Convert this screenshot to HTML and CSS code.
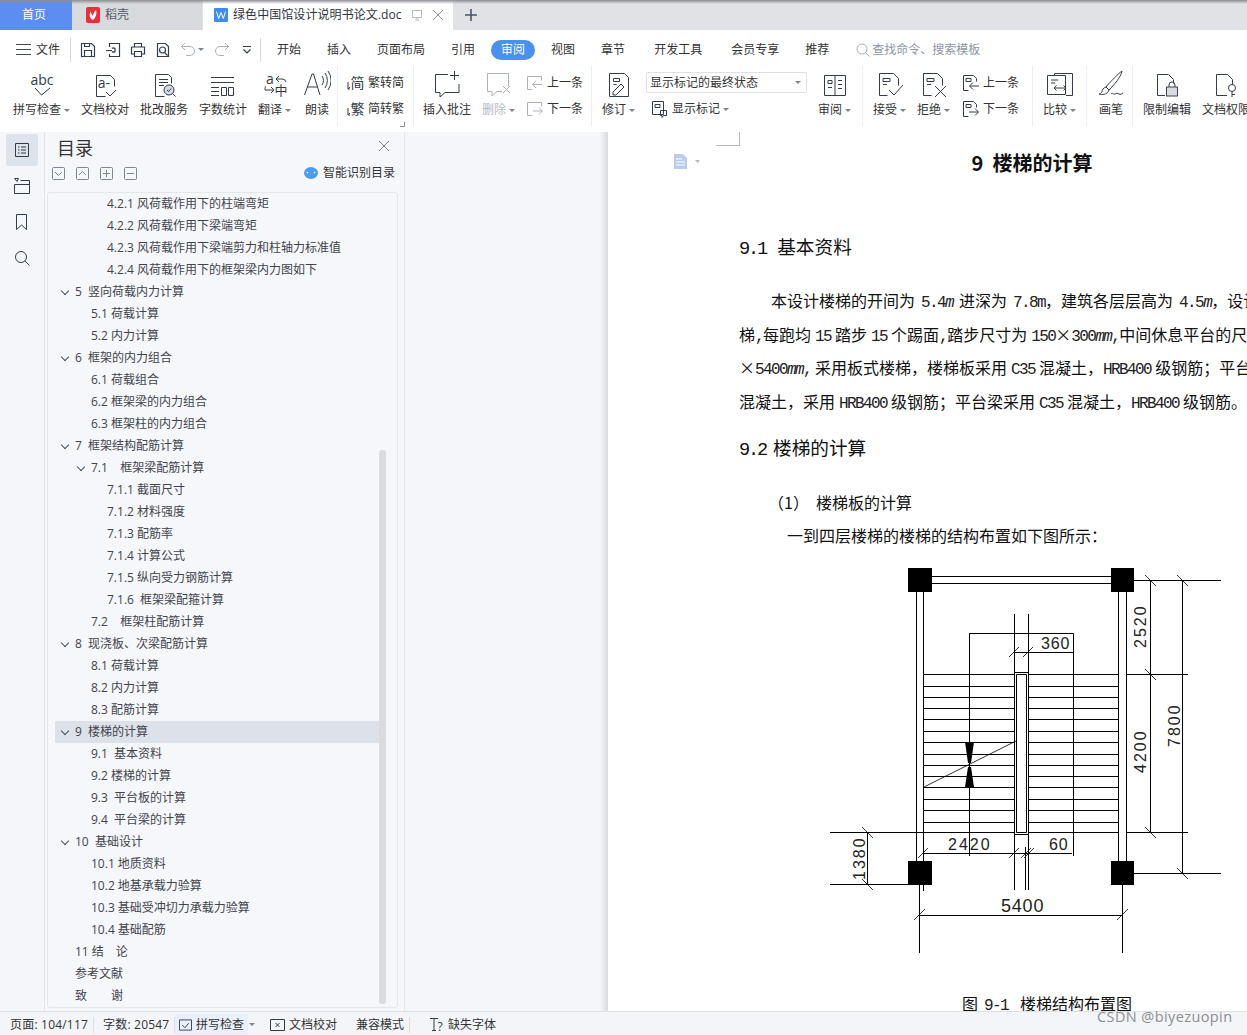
FILE: index.html
```html
<!DOCTYPE html>
<html lang="zh">
<head>
<meta charset="utf-8">
<title>绿色中国馆设计说明书论文.doc</title>
<link rel="stylesheet" href="styles.css">
</head>
<body>
<div class="app">
  <header class="tabbar">
    <div class="tab tab-home">首页</div>
    <div class="tab tab-shell">
      <svg class="logo" viewBox="0 0 14 16"><rect width="14" height="16" rx="2" fill="#ee2b38"/><path d="M7 13C3 11 3 7 5 4c0 3 1 4 2 5 0-2 1-4 3-6 1 3 0 8-3 10z" fill="#fff"/></svg>
      <span>稻壳</span>
    </div>
    <div class="tab tab-doc">
      <svg class="logo" viewBox="0 0 14 14"><rect width="14" height="14" rx="1" fill="#3f8cf0"/><path d="M2.500 3.500l2.200 7 2.300-6 2.300 6 2.200-7" fill="none" stroke="#fff"/></svg>
      <span class="doc-name">绿色中国馆设计说明书论文.doc</span>
      <svg class="tab-ic" viewBox="0 0 12 12"><path d="M1.500 1.500h9v7h-9zM6 8.500v2.500M4 11h4" fill="none" stroke="#b5b9c0"/></svg>
      <svg class="tab-ic" viewBox="0 0 12 12"><path d="M1 1l10 10M11 1L1 11" fill="none" stroke="#8d929a"/></svg>
    </div>
    <svg class="tab-add" viewBox="0 0 12 12"><path d="M6 0v12M0 6h12" fill="none" stroke="#4c5564" stroke-width="1.600"/></svg>
  </header>

  <nav class="menubar">
    <div class="qat">
      <svg class="ham" viewBox="0 0 15 11"><path d="M0 .5h15M0 5.500h15M0 10.500h15" stroke="#444b57" fill="none"/></svg>
      <span class="qat-file">文件</span>
      <span class="vsep"></span>
      <svg class="qi" viewBox="0 0 16 16"><path class="s" d="M1.500 1.500h10l3 3v10h-13zM4.500 14.500v-6h7v6M4.500 1.500v3h5v-3"/></svg>
      <svg class="qi" viewBox="0 0 16 16"><path class="s" d="M4.500 5V1.500h10v13h-10V12M1 8.500h6M7 6.500a2 2 0 0 1 3 0v3a2 2 0 0 1-3 0"/></svg>
      <svg class="qi" viewBox="0 0 16 16"><path class="s" d="M4.500 5V1.500h7V5M1.500 5h13v7h-3M4.500 12h-3V5M4.500 9.500h7v5h-7z"/></svg>
      <svg class="qi" viewBox="0 0 16 16"><path class="s" d="M2.500 1.500h8l3 3v10h-11zM7.500 5a3 3 0 1 1 0 6 3 3 0 0 1 0-6zM9.500 10.500l3 3"/></svg>
      <svg class="qi q-off" viewBox="0 0 16 16"><path class="g" d="M5 1L1.500 4.500 5 8M1.500 4.500H10a4.500 4.500 0 0 1 0 9H6"/></svg>
      <i class="caret q-caret"></i>
      <svg class="qi q-off2" viewBox="0 0 16 16"><path class="g" d="M11 1l3.500 3.500L11 8M14.500 4.500H6a4.500 4.500 0 0 0 0 9h4"/></svg>
      <svg class="qi q-more" viewBox="0 0 10 10"><path class="s" d="M1 1.500h8M1.500 4.500L5 8l3.500-3.500"/></svg>
      <span class="vsep"></span>
    </div>
    <ul class="menu">
      <li>开始</li><li>插入</li><li>页面布局</li><li>引用</li><li class="on">审阅</li><li>视图</li><li class="w">章节</li><li class="w">开发工具</li><li>会员专享</li><li>推荐</li>
    </ul>
    <div class="search">
      <svg class="search-ic" viewBox="0 0 14 14"><circle cx="6" cy="6" r="5" fill="none" stroke="#a9b2c0"/><path d="M9.500 9.500l4 4" stroke="#a9b2c0"/></svg>
      <span>查找命令、搜索模板</span>
    </div>
  </nav>

  <section class="ribbon">
    <div class="group g1">
      <div class="tool"><svg class="big" viewBox="0 0 28 28"><text x="14" y="15" class="svgt lg">abc</text><path class="s" d="M7 18l6.500 7L22 18"/></svg><span>拼写检查<i class="caret"></i></span></div>
      <div class="tool"><svg class="big" viewBox="0 0 28 28"><path class="s" d="M5.500 5.500h14l4 4v7M5.500 5.500v21h9"/><text x="13" y="18" class="svgt lg">a-</text><path class="s" d="M15 22l4 4 6-6"/></svg><span>文档校对</span></div>
      <div class="tool"><svg class="big" viewBox="0 0 28 28"><path class="s" d="M5.500 4.500h13l3 3v6M5.500 4.500v22h9M9 9.500h9M9 12.500h9M9 15.500h5"/><circle class="s scfill" cx="19" cy="20" r="5"/><path class="s" d="M22.500 23.500l3 3M17 20l1.500 1.500 2.500-3"/></svg><span>批改服务</span></div>
      <div class="tool"><svg class="big" viewBox="0 0 28 28"><path class="s" d="M2 7.500h23M2 12.500h23M2 17.500h8M2 21.500h8M2 25.500h8M12.500 17.500h5v8h-5zM19.500 17.500h5v8h-5z"/></svg><span>字数统计</span></div>
      <div class="tool"><svg class="big" viewBox="0 0 28 28"><text x="9" y="14" class="svgt lg">a</text><path class="s" d="M18 6l-3 3 3 3M15 9h6a4 4 0 0 1 4 3M4 20h8M10 17l3 3-3 3M4 20c0-2 0-3 1-4"/><text x="20" y="25" class="svgt md">中</text></svg><span>翻译<i class="caret"></i></span></div>
      <div class="tool"><svg class="big" viewBox="0 0 28 28"><path class="s" d="M1.500 25L9 4h1.500L17 25M4.500 17h10M19 6a8 8 0 0 1 0 9M22 3a13 13 0 0 1 0 15M25 1a16 16 0 0 1 0 19"/></svg><span>朗读</span></div>
    </div>
    <div class="group g2">
      <div class="pair"><div class="row"><svg class="mid" viewBox="0 0 18 18"><text x="10.500" y="14" class="svgt lg">简</text><path class="s" d="M1 8v7h2M1 15l2-2"/></svg><span>繁转简</span></div>
      <div class="row"><svg class="mid" viewBox="0 0 18 18"><text x="10.500" y="14" class="svgt lg">繁</text><path class="s" d="M1 8v7h2M1 15l2-2"/></svg><span>简转繁</span></div></div>
      <i class="launcher"></i>
    </div>
    <div class="group g3">
      <div class="tool"><svg class="big" viewBox="0 0 28 28"><path class="s" d="M15 4.500H2.500v18H7V27l5-4.500h14V14M21.500 1v9M17 5.500h9"/></svg><span>插入批注</span></div>
      <div class="tool off"><svg class="big" viewBox="0 0 28 28"><path class="g" d="M2.500 3.500h21v13M2.500 3.500v18H7V26l5-4.500h5M18 16l7 7M25 16l-7 7"/></svg><span>删除<i class="caret"></i></span></div>
      <div class="pair off"><div class="row"><svg class="mid" viewBox="0 0 18 18"><path class="g" d="M1.500 2.500h14v4M1.500 2.500v13h5M16 10.500H7M10 7l-3.500 3.500L10 14"/></svg><span>上一条</span></div>
      <div class="row"><svg class="mid" viewBox="0 0 18 18"><path class="g" d="M1.500 2.500h14v4M1.500 2.500v13h5M7 11h9M13 7.500l3.500 3.500-3.500 3.500"/></svg><span>下一条</span></div></div>
    </div>
    <div class="group g4">
      <div class="tool"><svg class="big" viewBox="0 0 28 28"><path class="s" d="M4.500 3.500h15l4 4v19h-19zM8.500 8.500h6v3h-6zM8 22l8-8 3 3-8 8H8zM8.500 14.500h3"/></svg><span>修订<i class="caret"></i></span></div>
      <div class="state">
        <div class="select"><span>显示标记的最终状态</span><i class="caret"></i></div>
        <div class="row"><svg class="mid" viewBox="0 0 18 18"><path class="s" d="M1.500 1.500h11v13h-11zM4 4.500h5v3H4zM9.500 10.500h6v5h-3l-1.500 2v-2H9.500z"/></svg><span>显示标记<i class="caret"></i></span></div>
      </div>
      <div class="tool"><svg class="big" viewBox="0 0 28 28"><path class="s" d="M3.500 5.500h21v20h-21zM14 5.500v20M7 10.500h4v3H7zM7 17.500h4M17 10.500h4M17 14.500h4M17 18.500h4"/></svg><span>审阅<i class="caret"></i></span></div>
    </div>
    <div class="group g5">
      <div class="tool"><svg class="big" viewBox="0 0 28 28"><path class="s" d="M3.500 3.500h14l5 5v7M3.500 3.500v22h8M7 8.500h7v3H7zM7 14.500h4M13 20l5 5 9-10"/></svg><span>接受<i class="caret"></i></span></div>
      <div class="tool"><svg class="big" viewBox="0 0 28 28"><path class="s" d="M3.500 3.500h14l5 5v7M3.500 3.500v22h8M7 8.500h7v3H7zM7 14.500h4M15 16l11 11M26 16L15 27"/></svg><span>拒绝<i class="caret"></i></span></div>
      <div class="pair"><div class="row"><svg class="mid" viewBox="0 0 18 18"><path class="s" d="M1.500 1.500h10l3 3v3M1.500 1.500v15h5M4 4.500h5v3H4zM17 12H8M11 8.500L7.500 12l3.500 3.500"/></svg><span>上一条</span></div>
      <div class="row"><svg class="mid" viewBox="0 0 18 18"><path class="s" d="M1.500 1.500h10l3 3v3M1.500 1.500v15h5M4 4.500h5v3H4zM7 12h9M13 8.500l3.500 3.500-3.500 3.500"/></svg><span>下一条</span></div></div>
    </div>
    <div class="group g6">
      <div class="tool"><svg class="big" viewBox="0 0 28 28"><path class="s" d="M8.500 5V3.500h18v22H20M1.500 5.500h18v19h-18zM5 10h7M5 13h4M8 18h12M10.500 15.500L8 18l2.500 2.500M17.500 15.500L20 18l-2.500 2.500"/></svg><span>比较<i class="caret"></i></span></div>
    </div>
    <div class="group g7">
      <div class="tool"><svg class="big" viewBox="0 0 28 28"><path class="s" d="M25 1C22 3 13 12 9 17l3 3C17 15 24 7 25 1zM9 17c-3 1-4 3-4 5-1 1-2 2-3 2 3 1 8 1 10-4M14 24c2-2 2 1 4 0s2-1 4 0 2 0 4-1"/></svg><span>画笔</span></div>
    </div>
    <div class="group g8">
      <div class="tool"><svg class="big" viewBox="0 0 28 28"><path class="s" d="M12 25.500H4.500v-21h11l5 5v4"/><path class="s" d="M16 17v-2a3 3 0 0 1 6 0v2"/><rect x="13.500" y="17" width="11" height="9" fill="#d8dade" stroke="#3d4654"/></svg><span>限制编辑</span></div>
      <div class="tool"><svg class="big" viewBox="0 0 28 28"><path class="s" d="M15 25.500H4.500v-21h11l5 5v5"/><circle class="s" cx="20" cy="18" r="3.500"/><path class="s" d="M20 21.500V27M20 24.500h3"/></svg><span>文档权限</span></div>
    </div>
  </section>

  <main class="workspace">
    <aside class="rail">
      <div class="rail-btn on"><svg viewBox="0 0 16 16"><path class="s" d="M1.500 1.500h13v13h-13zM4 5h1.500M7 5h5M4 8h1.500M7 8h5M4 11h1.500M7 11h5"/></svg></div>
      <div class="rail-btn"><svg viewBox="0 0 16 16"><path class="s" d="M.5 .5h4L3 3.500zM6.500 2.500h9v13H.5V6.500h15"/></svg></div>
      <div class="rail-btn"><svg viewBox="0 0 16 16"><path class="s" d="M2.500 .5h10v15L7.500 11l-5 4.500z"/></svg></div>
      <div class="rail-btn"><svg viewBox="0 0 16 16"><circle class="s" cx="7" cy="7" r="5.500"/><path class="s" d="M11 11l4.500 4.500"/></svg></div>
    </aside>
    <section class="toc">
      <div class="toc-head">
        <h2>目录</h2>
        <svg class="toc-x" viewBox="0 0 10 10"><path d="M0 0l10 10M10 0L0 10" stroke="#777d87" fill="none"/></svg>
      </div>
      <div class="toc-tools">
        <svg class="mini" viewBox="0 0 13 13"><rect x=".5" y=".5" width="12" height="12" rx="1" class="m"/><path class="m" d="M3 5l3.500 3.500L10 5"/></svg>
        <svg class="mini" viewBox="0 0 13 13"><rect x=".5" y=".5" width="12" height="12" rx="1" class="m"/><path class="m" d="M3 8l3.500-3.500L10 8"/></svg>
        <svg class="mini" viewBox="0 0 13 13"><rect x=".5" y=".5" width="12" height="12" rx="1" class="m"/><path class="m" d="M3 6.500h7M6.500 3v7"/></svg>
        <svg class="mini" viewBox="0 0 13 13"><rect x=".5" y=".5" width="12" height="12" rx="1" class="m"/><path class="m" d="M3 6.500h7"/></svg>
        <div class="smart"><svg viewBox="0 0 14 12"><ellipse cx="7" cy="6" rx="7" ry="6" fill="#4b9bf4"/><path d="M3 6l1-1M11 6l-1-1" stroke="#fff" stroke-width="1.300"/></svg><span>智能识别目录</span></div>
      </div>
      <div class="toc-list">
        <div class="scroll"></div>
        <div class="r l3">4.2.1 风荷载作用下的柱端弯矩</div>
        <div class="r l3">4.2.2 风荷载作用下梁端弯矩</div>
        <div class="r l3">4.2.3 风荷载作用下梁端剪力和柱轴力标准值</div>
        <div class="r l3">4.2.4 风荷载作用下的框架梁内力图如下</div>
        <div class="r l1 open">5  竖向荷载内力计算</div>
        <div class="r l2">5.1 荷载计算</div>
        <div class="r l2">5.2 内力计算</div>
        <div class="r l1 open">6  框架的内力组合</div>
        <div class="r l2">6.1 荷载组合</div>
        <div class="r l2">6.2 框架梁的内力组合</div>
        <div class="r l2">6.3 框架柱的内力组合</div>
        <div class="r l1 open">7  框架结构配筋计算</div>
        <div class="r l2 open">7.1    框架梁配筋计算</div>
        <div class="r l3">7.1.1 截面尺寸</div>
        <div class="r l3">7.1.2 材料强度</div>
        <div class="r l3">7.1.3 配筋率</div>
        <div class="r l3">7.1.4 计算公式</div>
        <div class="r l3">7.1.5 纵向受力钢筋计算</div>
        <div class="r l3">7.1.6  框架梁配箍计算</div>
        <div class="r l2">7.2    框架柱配筋计算</div>
        <div class="r l1 open">8  现浇板、次梁配筋计算</div>
        <div class="r l2">8.1 荷载计算</div>
        <div class="r l2">8.2 内力计算</div>
        <div class="r l2">8.3 配筋计算</div>
        <div class="r l1 open cur">9  楼梯的计算</div>
        <div class="r l2">9.1  基本资料</div>
        <div class="r l2">9.2 楼梯的计算</div>
        <div class="r l2">9.3  平台板的计算</div>
        <div class="r l2">9.4  平台梁的计算</div>
        <div class="r l1 open">10  基础设计</div>
        <div class="r l2">10.1 地质资料</div>
        <div class="r l2">10.2 地基承载力验算</div>
        <div class="r l2">10.3 基础受冲切力承载力验算</div>
        <div class="r l2">10.4 基础配筋</div>
        <div class="r l1">11 结　论</div>
        <div class="r l1">参考文献</div>
        <div class="r l1">致　　谢</div>
      </div>
    </section>
    <div class="gutter"></div>
    <article class="page">
      <div class="crop"></div>
      <svg class="para-mark" viewBox="0 0 26 15"><path d="M0 0h9l4 4v11H0z" fill="#b9cdea"/><path d="M2 5h6M2 8h9M2 11h9" stroke="#fff"/><path d="M21 6h5l-2.500 3z" fill="#b5b8bd"/></svg>
      <div class="doc">
        <h1>9<span class="sp"> </span>楼梯的计算</h1>
        <h3 class="h-first"><span class="h">9.1 </span> 基本资料</h3>
        <p class="body indent wide">本设计楼梯的开间为<span class="a"> 5.4<i>m</i> </span>进深为<span class="a"> 7.8m</span>，建筑各层层高为<span class="a"> 4.5<i>m</i></span>，设计</p>
        <p class="body">梯<span class="a">,</span>每跑均<span class="a"> 15 </span>踏步<span class="a"> 15 </span>个踢面<span class="a">,</span>踏步尺寸为<span class="a"> 150</span>×<span class="a">300<i>mm</i>,</span>中间休息平台的尺寸</p>
        <p class="body">×<span class="a">5400<i>mm</i>, </span>采用板式楼梯，楼梯板采用<span class="a"> C35 </span>混凝土，<span class="a">HRB400 </span>级钢筋；平台</p>
        <p class="body">混凝土，采用<span class="a"> HRB400 </span>级钢筋；平台梁采用<span class="a"> C35 </span>混凝土，<span class="a">HRB400 </span>级钢筋。</p>
        <h3 class="h-second"><span class="h">9.2 </span>楼梯的计算</h3>
        <p class="body sub">（1）&nbsp; 楼梯板的计算</p>
        <p class="body sub2">一到四层楼梯的楼梯的结构布置如下图所示：</p>
        <svg class="plan" viewBox="0 0 400 400" width="400" height="400">
          <g class="ln">
            <path d="M102 16.500H281M102 23.500H281"/>
            <path d="M86.500 32V301M93.500 32V301M288.500 32V301M296.500 32V301"/>
            <path d="M184.500 54V330M198.500 54V330M195.500 287V330"/>
            <path d="M139.500 73V296M139.500 73.500H243.500V296M184 92.500H243.500M94 293.500H242"/>
            <path d="M184.500 112.500H198.500V274.500H184.500zM186.500 114.500H196.500V272.500H186.500z"/>
            <path d="M94 114.500H184M199 114.500H288M94 126.500H184M199 126.500H288M94 137.500H184M199 137.500H288M94 148.500H184M199 148.500H288M94 159.500H184M199 159.500H288M94 171.500H184M199 171.500H288M94 182.500H184M199 182.500H288M94 194.500H184M199 194.500H288M94 205.500H184M199 205.500H288M94 216.500H184M199 216.500H288M94 227.500H184M199 227.500H288M94 239.500H184M199 239.500H288M94 250.500H184M199 250.500H288M94 262.500H184M199 262.500H288"/>
            <path d="M0 272.500H184M199 272.500H288M297 272.500H358M297 114.500H358M304 20.500H391M304 313.500H391"/>
            <path d="M320.500 20V272M352.500 20V313M0 324.500H78M37.500 272V324"/>
            <path d="M89.500 325V393M292.500 325V393M93.500 325V331M89 355.500H292"/>
          </g>
          <g class="tick">
            <path d="M179 97l10-10M193 97l10-10M179 298l10-10M191 298l10-10M194 298l10-10M88 298l10-10"/>
            <path d="M315 15l11 11M315 109l11 11M315 267l11 11M347 15l11 11M347 308l11 11M32 267l11 11M32 319l11 11M84 360l11-11M287 360l11-11"/>
            <path d="M94 227L186 181"/>
          </g>
          <path class="solid" d="M135 182h9l-3 21h-3zM138 207h3l3 20h-9z"/>
          <rect class="solid" x="78" y="8" width="24" height="24"/>
          <rect class="solid" x="281" y="8" width="23" height="24"/>
          <rect class="solid" x="78" y="301" width="24" height="24"/>
          <rect class="solid" x="281" y="301" width="23" height="24"/>
          <text class="cad" x="211" y="89">360</text>
          <text class="cad four" x="118" y="290">2420</text>
          <text class="cad" x="219" y="290">60</text>
          <text class="cad big5" x="171" y="352">5400</text>
          <text class="cad four" transform="translate(316 88) rotate(-90)">2520</text>
          <text class="cad four" transform="translate(316 213) rotate(-90)">4200</text>
          <text class="cad four" transform="translate(350 187) rotate(-90)">7800</text>
          <text class="cad four" transform="translate(35 320) rotate(-90)">1380</text>
        </svg>
        <p class="caption">图<span class="a"> 9-1  </span>楼梯结构布置图</p>
      </div>
    </article>
  </main>

  <footer class="status">
    <span class="st st-page">页面: 104/117</span>
    <span class="st-sep"></span>
    <span class="st st-count">字数: 20547</span>
    <span class="st-sep"></span>
    <span class="st st-on"><svg viewBox="0 0 14 14"><path class="s" d="M.5 1.500h13v11H.5zM3.500 7l3 3 4-5"/></svg>拼写检查</span>
    <i class="caret st-caret"></i>
    <span class="st st-check"><svg viewBox="0 0 15 14"><path class="s" d="M.5 1.500h14v11H.5zM5.500 5l4 4M9.500 5l-4 4"/></svg>文档校对</span>
    <span class="st st-mode">兼容模式</span>
    <span class="st-sep"></span>
    <span class="st st-font"><svg viewBox="0 0 15 15"><path class="s" d="M1 1.500h8M5 1.500v12M3 13.500h4"/><text x="11" y="14" class="svgt">?</text></svg>缺失字体</span>
  </footer>
  <div class="watermark">CSDN @biyezuopin</div>
</div>
</body>
</html>
```

FILE: styles.css
```css
* { box-sizing: border-box; }
html, body { margin: 0; height: 100%; overflow: hidden; }
body { font: 12px/18px "Open Sans", "Noto Sans CJK SC", sans-serif; color: #3a3f48; background: #fff; }
.app { position: relative; width: 1247px; height: 1035px; display: flex; flex-direction: column; overflow: hidden; }

.s { fill: none; stroke: #333c49; stroke-width: 1; }
.g { fill: none; stroke: #adb2ba; stroke-width: 1; }
.m { fill: none; stroke: #7c8592; stroke-width: 1; }
.scfill { fill: #d5d8dd; }
.svgt { font: 12px "Open Sans", "Noto Sans CJK SC", sans-serif; fill: #333c49; text-anchor: middle; }
.svgt.lg { font-size: 14px; }
.svgt.md { font-size: 13px; }
.qi .s { stroke-width: 1.2; }

.caret { display: inline-block; width: 0; height: 0; margin-left: 3px; border: 3px solid transparent; border-top: 3px solid #7e8590; border-bottom: 0; vertical-align: 2px; }

/* tabs */
.tabbar { position: relative; flex: 0 0 30px; height: 30px; display: flex; align-items: center; background: #e0e2e6; }
.tabbar::after { content: ""; position: absolute; left: 0; right: 0; top: 0; height: 4px; background: linear-gradient(#8b8d91, rgba(139,141,145,0)); }
.tab { height: 30px; display: flex; align-items: center; }
.tab-home { width: 72px; padding-right: 4px; justify-content: center; background: #5c8df2; color: #fff; }
.tab-shell { width: 130px; padding-left: 14px; background: #d8dade; color: #555b66; }
.tab-doc { margin-left: 1px; width: 250px; padding-left: 11px; background: #fff; color: #30343b; }
.logo { width: 14px; height: 16px; margin-right: 5px; }
.tab-doc .logo { height: 14px; }
.doc-name { margin-right: 0; letter-spacing: .07px; }
.tab-ic { width: 12px; height: 12px; margin-left: 9px; }
.tab-add { width: 12px; height: 12px; margin-left: 12px; }

/* menu */
.menubar { flex: 0 0 36px; height: 36px; display: flex; align-items: center; padding-top: 3px; background: #fff; }
.qat { display: flex; align-items: center; padding-left: 16px; }
.ham { width: 15px; height: 11px; }
.qat-file { margin: 0 10px 0 5px; color: #333; }
.vsep { width: 1px; height: 24px; background: #d8dadf; }
.qi { width: 16px; height: 16px; margin-left: 9px; }
.q-caret { margin-left: 2px; }
.q-off2 { margin-left: 10px; }
.q-more { width: 10px; height: 10px; margin: 0 8px 0 12px; }
.menu { display: flex; align-items: center; margin: 0 0 0 16px; padding: 0; list-style: none; color: #333; }
.menu li { margin-right: 26px; }
.menu li.on { margin: 0 16px 0 -10px; padding: 0 10px; height: 20px; line-height: 20px; border-radius: 10px; background: #4a90f2; color: #fff; }
.menu li.w { margin-right: 29px; }
.search { display: flex; align-items: center; margin-left: 1px; color: #8e96a3; gap: 2px; }
.search-ic { width: 14px; height: 14px; }

/* ribbon */
.ribbon { flex: 0 0 66px; height: 66px; display: flex; background: #fff; overflow: hidden; white-space: nowrap; }
.group { position: relative; flex: none; display: flex; height: 60px; gap: 11px; padding: 4px 10px 0; border-right: 1px solid #eceef1; }
.tool { display: flex; flex-direction: column; align-items: center; color: #333; }
.tool span { margin-top: 3px; }
.big { width: 28px; height: 28px; }
.off, .off .svgt { color: #b4b8bf; }
.pair { display: flex; flex-direction: column; gap: 8px; padding-top: 4px; color: #333; }
.row { display: flex; align-items: center; gap: 3px; height: 18px; }
.mid { width: 18px; height: 18px; }
.g1 { width: 338px; padding-left: 13px; }
.g1 .tool:nth-child(5) { margin-right: 1px; }
.g2 { width: 76px; padding-left: 9px; }
.g3 { width: 178px; padding-left: 9px; }
.g4 { width: 271px; }
.g5 { width: 170px; padding-left: 10px; }
.g5 .pair { margin-left: 1px; }
.g6 { width: 54px; }
.g7 { width: 46px; }
.g8 { padding-left: 10px; border: 0; }
.launcher { position: absolute; right: 8px; bottom: -1px; width: 5px; height: 5px; border-right: 1px solid #8e949d; border-bottom: 1px solid #8e949d; }
.state { width: 161px; display: flex; flex-direction: column; gap: 7px; padding-top: 2px; }
.select { height: 21px; display: flex; align-items: center; justify-content: space-between; padding: 0 5px 0 3px; border: 1px solid #dfe1e5; border-radius: 2px; color: #333; }
.state .row { padding-left: 5px; color: #333; }

/* workspace */
.workspace { flex: 1; display: flex; min-height: 0; box-shadow: inset 0 2px 2px #eceef1; background: #f5f6f9; }
.rail { flex: 0 0 45px; width: 45px; padding: 2px 6px 0; border-right: 1px solid #e3e5ea; display: flex; flex-direction: column; gap: 4px; background: #f5f6f9; }
.rail-btn { width: 32px; height: 32px; display: flex; align-items: center; justify-content: center; border-radius: 2px; }
.rail-btn.on { background: #dee2e9; }
.rail-btn svg { width: 16px; height: 16px; }
.toc { position: relative; flex: 0 0 360px; width: 360px; padding: 0 6px 0 2px; border-right: 1px solid #e3e5ea; display: flex; flex-direction: column; background: #f6f7fa; }
.toc-head { height: 31px; display: flex; align-items: center; justify-content: space-between; padding: 0 10px; }
.toc-head h2 { margin: 0; font-size: 18px; font-weight: 400; line-height: 32px; color: #333; }
.toc-x { width: 10px; height: 10px; margin-top: -4px; margin-right: -1px; }
.toc-tools { height: 29px; display: flex; align-items: center; gap: 11px; padding: 0 3px 9px 5px; }
.mini { width: 13px; height: 13px; }
.smart { margin-left: auto; display: flex; align-items: center; gap: 5px; color: #333; }
.smart svg { width: 14px; height: 12px; }
.toc-list { position: relative; flex: 1; min-height: 0; overflow: hidden; padding: 0 0 0 7px; border: 1px solid #e4e7ec; border-radius: 3px; background: #f6f7fa; margin-bottom: 3px; }
.r { position: relative; height: 22px; line-height: 22px; width: 324px; white-space: pre; color: #3f444d; }
.l1 { padding-left: 20px; }
.l2 { padding-left: 36px; }
.l3 { padding-left: 52px; }
.open::before { content: ""; position: absolute; top: 7px; width: 5px; height: 5px; border-right: 1px solid #4a505a; border-bottom: 1px solid #4a505a; transform: rotate(45deg); }
.l1.open::before { left: 7px; }
.l2.open::before { left: 23px; }
.cur { background: #dde1e9; }
.scroll { position: absolute; left: 331px; top: 257px; width: 7px; height: 554px; border-radius: 3px; background: #d9dbe0; }
.gutter { flex: 0 0 203px; background: linear-gradient(90deg, #f5f6f9 0, #f5f6f9 96%, #d9dadc 100%); }

/* page */
.page { position: relative; flex: 1; min-width: 0; overflow: hidden; background: #fff; }
.crop { position: absolute; left: 108px; top: -2px; width: 24px; height: 16px; border-right: 1px solid #b8b8b8; border-bottom: 1px solid #b8b8b8; }
.para-mark { position: absolute; left: 66px; top: 22px; width: 26px; height: 15px; }
.doc { width: 586px; margin-left: 131px; padding-top: 16px; font-family: "Noto Sans CJK SC", sans-serif; color: #111; }
.doc h1 { margin: 0; font-size: 20px; line-height: 30px; font-weight: 700; text-align: center; white-space: pre; }
.doc h1 .sp { font-family: "Liberation Mono", monospace; letter-spacing: -3px; line-height: 0; }
.doc h3 { margin: 0; font-size: 18.67px; line-height: 24px; font-weight: 400; white-space: pre; }
.h-first { margin-top: 56px !important; }
.h-second { margin-top: 17px !important; }
.h { font-family: "Liberation Mono", monospace; letter-spacing: -2.2px; word-spacing: -2px; line-height: 0; }
.a { font-family: "Liberation Mono", monospace; letter-spacing: -1.6px; word-spacing: -4px; white-space: pre; line-height: 0; color: #222; }
.wide .a { word-spacing: -2px; }
.body { margin: 0; font-size: 16px; line-height: 33.5px; white-space: nowrap; }
.indent { text-indent: 32px; margin-top: 26px; }
.sub { margin-top: 27px; padding-left: 29px; }
.sub2 { margin-top: -1px; padding-left: 48px; }
.plan { display: block; margin: 8px 0 0 91px; }
.ln { fill: none; stroke: #000; stroke-width: 1; }
.tick { fill: none; stroke: #000; stroke-width: .8; }
.solid { fill: #000; }
.cad { font: 16px "Liberation Sans", sans-serif; fill: #222; letter-spacing: .8px; }
.four { letter-spacing: 2px; }
.big5 { font-size: 18px; }
.caption { margin: 31px 0 0 223px; font-size: 16px; line-height: 24px; white-space: nowrap; }
.caption .a { word-spacing: -2px; }
.watermark { position: absolute; left: 1097px; top: 1007px; font: 14.5px/20px "Open Sans", sans-serif; color: #8e8e8e; white-space: nowrap; letter-spacing: .4px; }

/* status */
.status { flex: 0 0 24px; height: 24px; display: flex; align-items: center; background: #f4f5f8; border-top: 1px solid #dfe1e5; padding: 2px 0 0 10px; color: #333; }
.st { display: flex; align-items: center; height: 21px; white-space: nowrap; }
.st svg { width: 14px; height: 14px; margin-right: 4px; }
.st-page { width: 83px; letter-spacing: .2px; }
.st-count { width: 71px; letter-spacing: .2px; }
.st-sep { width: 1px; height: 16px; margin-right: 9px; background: #dcdee3; }
.st-on { margin: 0 0 0 -9px; padding: 0 4px; width: 73px; background: #e8f0fb; }
.st-caret { margin-left: 1px; }
.st-check { margin-left: 15px; }
.st-check svg { width: 15px; }
.st-mode { margin-left: 19px; width: 53px; }
.st-font { margin-left: 10px; }
.st-font svg { width: 15px; height: 15px; }
```
